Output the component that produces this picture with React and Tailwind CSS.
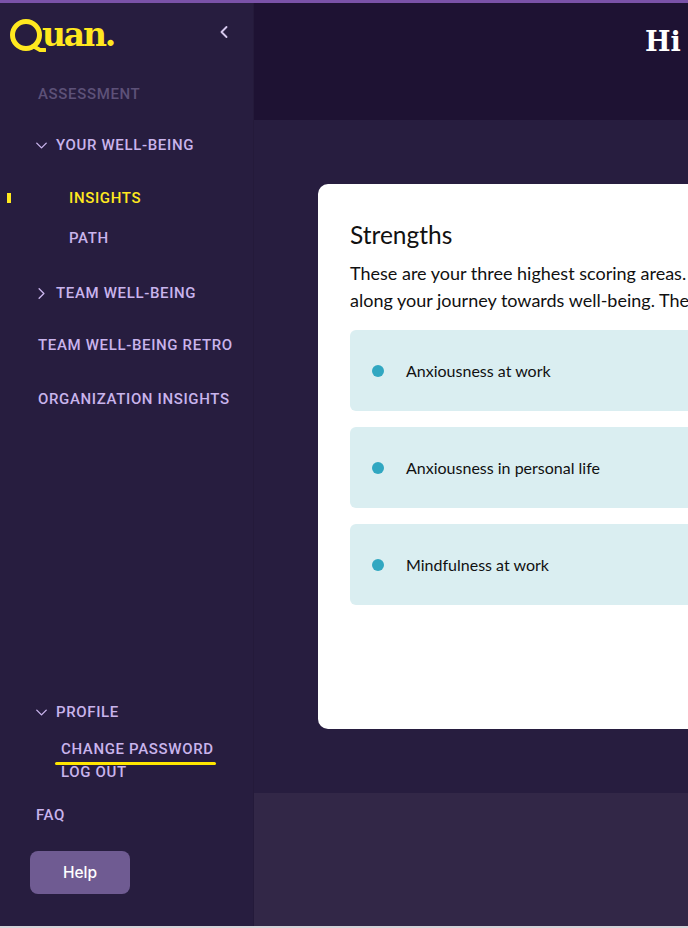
import { ChevronDown, ChevronLeft, ChevronRight } from "lucide-react";

const navText = "font-['Roboto',sans-serif] font-medium text-[15px] tracking-[0.65px] text-[#c9b4ec]";

function Logo() {
  return (
    <div className="flex items-start text-[#ffe81f] h-[40px]">
      <svg width="36" height="34" viewBox="0 0 36 34" className="block shrink-0">
        <circle cx="16" cy="16" r="13.5" fill="none" stroke="currentColor" strokeWidth="5" />
        <path d="M23 27 L30 31 L35 31" fill="none" stroke="currentColor" strokeWidth="4" strokeLinecap="round" />
      </svg>
      <span className="font-['DejaVu_Serif',serif] font-bold text-[33px] leading-[34px] tracking-[-2.2px] -ml-[4px] -mt-[1px]">
        uan.
      </span>
    </div>
  );
}

function Strength({ label }) {
  return (
    <div className="flex items-center h-[81px] rounded-[6px] bg-[#daeef1] pl-[22px]">
      <span className="w-3 h-3 rounded-full bg-[#31a7c1] shrink-0" />
      <span className="ml-[22px] font-['Lato',sans-serif] text-[16px] text-[#111]">{label}</span>
    </div>
  );
}

export default function App() {
  return (
    <div className="w-[688px] h-[928px] overflow-hidden flex flex-col bg-[#d4d4d8]">
      <div className="h-[3px] bg-[#7a52a8] shrink-0" />
      <div className="flex h-[923px] shrink-0">
        {/* Sidebar */}
        <aside className="relative w-[254px] shrink-0 bg-[#271d3f] border-r border-[#241a3a] flex flex-col">
          <div className="flex items-start justify-between h-[71px] pl-[10px] pr-[19px] pt-[16px]">
            <Logo />
            <ChevronLeft size={20} strokeWidth={2.25} className="text-[#d6c8ee] mt-[3px]" />
          </div>

          <div className={`h-10 flex items-center pl-[38px] ${navText} !text-[#5d5178]`}>ASSESSMENT</div>

          <div className={`mt-[11px] h-10 flex items-center pl-[32px] gap-[5px] ${navText}`}>
            <ChevronDown size={19} strokeWidth={1.75} />
            YOUR WELL-BEING
          </div>

          <div className="relative mt-[13px] h-10 flex items-center pl-[69px]">
            <span className="absolute left-[7px] top-[15px] w-[4px] h-[10px] bg-[#ffe81f]" />
            <span className={`${navText} !text-[#ffe81f]`}>INSIGHTS</span>
          </div>
          <div className={`h-10 flex items-center pl-[69px] ${navText}`}>PATH</div>

          <div className={`mt-[15px] h-10 flex items-center pl-[32px] gap-[5px] ${navText}`}>
            <ChevronRight size={19} strokeWidth={1.75} />
            TEAM WELL-BEING
          </div>
          <div className={`mt-3 h-10 flex items-center pl-[38px] ${navText}`}>TEAM WELL-BEING RETRO</div>
          <div className={`mt-[14px] h-10 flex items-center pl-[38px] ${navText}`}>ORGANIZATION INSIGHTS</div>

          <div className="flex-1" />

          <div className={`h-10 flex items-center pl-[32px] gap-[5px] ${navText}`}>
            <ChevronDown size={19} strokeWidth={1.75} />
            PROFILE
          </div>
          <div className={`mt-[7px] h-5 flex items-center pl-[61px] ${navText}`}>CHANGE PASSWORD</div>
          <div className={`mt-[3px] h-5 flex items-center pl-[61px] ${navText}`}>LOG OUT</div>
          <div className={`mt-[13px] h-10 flex items-center pl-[36px] ${navText}`}>FAQ</div>

          <div className="mt-[16px] mb-[32px] ml-[30px] w-[100px] h-[43px] rounded-[8px] bg-[#6f5b92] flex items-center justify-center font-['Inter',sans-serif] font-medium text-[15.5px] text-white">
            Help
          </div>

          {/* hand drawn marker under the menu item */}
          <div className="absolute left-[55px] top-[759px] w-[161px] h-[3px] rounded-full bg-[#ffe600]" />
        </aside>

        {/* Main */}
        <div className="flex-1 min-w-0 flex flex-col">
          <header className="h-[117px] shrink-0 bg-[#1e1233] pl-[391px] pt-[20px]">
            <h1 className="font-['DejaVu_Serif',serif] font-bold text-[27px] leading-[38px] text-white">Hi</h1>
          </header>
          <main className="h-[673px] shrink-0 bg-[#271d3f] pt-[64px] pl-[64px]">
            <section className="w-[700px] h-[545px] rounded-[10px] bg-white pt-[36px] px-[32px]">
              <h2 className="font-['Lato',sans-serif] text-[24.5px] leading-[30px] text-[#111]">Strengths</h2>
              <p className="mt-[10px] font-['Lato',sans-serif] text-[18px] leading-[27px] text-[#111] whitespace-nowrap">
                These are your three highest scoring areas.
                <br />
                along your journey towards well-being. They
              </p>
              <div className="mt-[16px] flex flex-col gap-4">
                <Strength label="Anxiousness at work" />
                <Strength label="Anxiousness in personal life" />
                <Strength label="Mindfulness at work" />
              </div>
            </section>
          </main>
          <footer className="flex-1 bg-[#322747]" />
        </div>
      </div>
    </div>
  );
}
